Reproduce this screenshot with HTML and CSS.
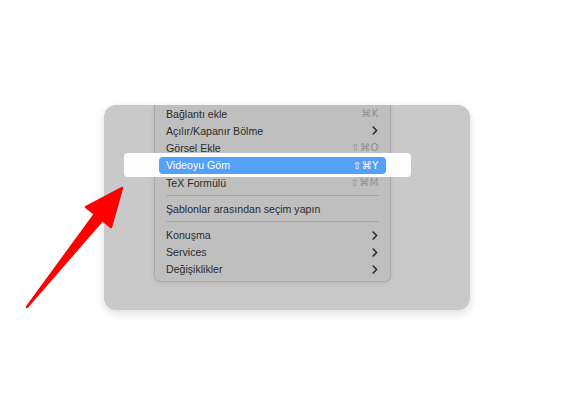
FILE: index.html
```html
<!DOCTYPE html>
<html lang="tr">
<head>
<meta charset="utf-8">
<title>Menu</title>
<link rel="stylesheet" href="styles.css">
</head>
<body>
<div class="stage">
  <div class="panel">
    <div class="spotlight"></div>
    <div class="menu">
      <div class="item"><span class="label">Bağlantı ekle</span><span class="key">⌘K</span></div>
      <div class="item"><span class="label">Açılır/Kapanır Bölme</span><svg class="chev" viewBox="0 0 6 9" width="6" height="9"><path d="M1.2 1 L4.6 4.5 L1.2 8" fill="none" stroke="#2a2a2a" stroke-width="1.6" stroke-linecap="round" stroke-linejoin="round"/></svg></div>
      <div class="item"><span class="label">Görsel Ekle</span><span class="key">⇧⌘O</span></div>
      <div class="item active"><span class="label">Videoyu Göm</span><span class="key">⇧⌘Y</span></div>
      <div class="item"><span class="label">TeX Formülü</span><span class="key">⇧⌘M</span></div>
      <div class="sep"></div>
      <div class="item"><span class="label">Şablonlar arasından seçim yapın</span></div>
      <div class="sep"></div>
      <div class="item"><span class="label">Konuşma</span><svg class="chev" viewBox="0 0 6 9" width="6" height="9"><path d="M1.2 1 L4.6 4.5 L1.2 8" fill="none" stroke="#2a2a2a" stroke-width="1.6" stroke-linecap="round" stroke-linejoin="round"/></svg></div>
      <div class="item"><span class="label">Services</span><svg class="chev" viewBox="0 0 6 9" width="6" height="9"><path d="M1.2 1 L4.6 4.5 L1.2 8" fill="none" stroke="#2a2a2a" stroke-width="1.6" stroke-linecap="round" stroke-linejoin="round"/></svg></div>
      <div class="item"><span class="label">Değişiklikler</span><svg class="chev" viewBox="0 0 6 9" width="6" height="9"><path d="M1.2 1 L4.6 4.5 L1.2 8" fill="none" stroke="#2a2a2a" stroke-width="1.6" stroke-linecap="round" stroke-linejoin="round"/></svg></div>
    </div>
  </div>
  <svg class="arrow" viewBox="0 0 574 414" width="574" height="414">
    <polygon points="122,188 86,207 95,214 27,307 102.5,220 111,227" fill="#ff0000" stroke="#ff0000" stroke-width="2.5" stroke-linejoin="round"/>
  </svg>
</div>
</body>
</html>
```
FILE: styles.css
```css
html, body {
  margin: 0;
  padding: 0;
  background: #ffffff;
}
.stage {
  position: relative;
  width: 574px;
  height: 414px;
  display: flex;
  align-items: center;
  justify-content: center;
  font-family: "Liberation Sans", Arial, sans-serif;
}
.panel {
  position: relative;
  width: 366px;
  height: 205px;
  background: #c9c9c9;
  border-radius: 12px;
  box-shadow: 0 3px 10px rgba(0, 0, 0, 0.14);
  overflow: hidden;
  display: flex;
  align-items: flex-start;
  padding-left: 50px;
  box-sizing: border-box;
}
.spotlight {
  position: absolute;
  left: 20px;
  top: 48px;
  width: 287px;
  height: 24px;
  background: #fdfdfd;
  border-radius: 4px;
  z-index: 1;
}
.menu {
  width: 237px;
  box-sizing: border-box;
  padding: 0.5px 4px 3px 4px;
  background: #bfbfbf;
  border: 1px solid #a9a9a9;
  border-top: none;
  border-radius: 0 0 6px 6px;
  box-shadow: 0 2px 5px rgba(0, 0, 0, 0.08);
}
.item {
  position: relative;
  height: 17.2px;
  display: flex;
  align-items: center;
  justify-content: space-between;
  padding: 0 7px;
  border-radius: 4px;
  font-size: 10.6px;
  color: #2b2b2b;
}
.item.active {
  z-index: 2;
  background: #56a1f8;
  color: #ffffff;
  height: 17.5px;
}
.key {
  font-family: "DejaVu Sans", sans-serif;
  font-size: 10px;
  color: #8f8f8f;
  letter-spacing: 0.6px;
}
.item.active .key {
  color: #ffffff;
}
.chev {
  display: block;
  margin-right: 1px;
}
.sep {
  height: 1px;
  background: #a6a6a6;
  margin: 4px 7px;
}
.arrow {
  position: absolute;
  left: 0;
  top: 0;
  z-index: 3;
}
```
